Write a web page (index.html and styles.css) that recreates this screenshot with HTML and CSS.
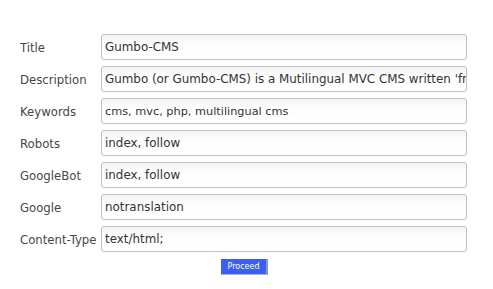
FILE: index.html
```html
<!DOCTYPE html>
<html>
<head>
<meta charset="utf-8">
<link rel="stylesheet" href="styles.css">
</head>
<body>
<form class="form">
  <div class="grid">
    <label class="label">Title</label>
    <input class="field" type="text" value="Gumbo-CMS">
    <label class="label">Description</label>
    <input class="field" type="text" value="Gumbo (or Gumbo-CMS) is a Mutilingual MVC CMS written 'from scratch'">
    <label class="label">Keywords</label>
    <input class="field small" type="text" value="cms, mvc, php, multilingual cms">
    <label class="label">Robots</label>
    <input class="field" type="text" value="index, follow">
    <label class="label">GoogleBot</label>
    <input class="field" type="text" value="index, follow">
    <label class="label">Google</label>
    <input class="field" type="text" value="notranslation">
    <label class="label">Content-Type</label>
    <input class="field" type="text" value="text/html;">
  </div>
  <div class="actions">
    <button class="btn" type="button">Proceed</button>
  </div>
</form>
</body>
</html>
```
FILE: styles.css
```css
html, body {
  margin: 0;
  padding: 0;
  background: #ffffff;
}
body {
  font-family: "DejaVu Sans", Verdana, sans-serif;
  color: #444;
}
.form {
  padding: 34px 0 0 20px;
}
.grid {
  display: grid;
  grid-template-columns: 81px 366px;
  row-gap: 6px;
  align-items: center;
}
.label {
  font-size: 11.7px;
  color: #474747;
  white-space: nowrap;
  padding-top: 1px;
}
.field {
  box-sizing: border-box;
  width: 366px;
  height: 26px;
  margin: 0;
  padding: 0 0 0 3px;
  border: 1px solid #c2c2c2;
  border-radius: 3px;
  background: linear-gradient(#f2f2f2, #fdfdfd 40%, #ffffff);
  font-family: "DejaVu Sans", Verdana, sans-serif;
  font-size: 11.9px;
  color: #333;
  outline: none;
}
.field.small {
  font-size: 11.3px;
}
.actions {
  display: flex;
  padding: 7px 0 0 201px;
}
.btn {
  box-sizing: border-box;
  width: 47px;
  height: 16px;
  margin: 0;
  padding: 0;
  border: none;
  border-right: 2px solid #8a9ab0;
  border-bottom: 1px solid #a9b4c4;
  background: #3b5ff2;
  color: #fff;
  font-family: "DejaVu Sans", Verdana, sans-serif;
  font-size: 8px;
  line-height: 14px;
}
```
